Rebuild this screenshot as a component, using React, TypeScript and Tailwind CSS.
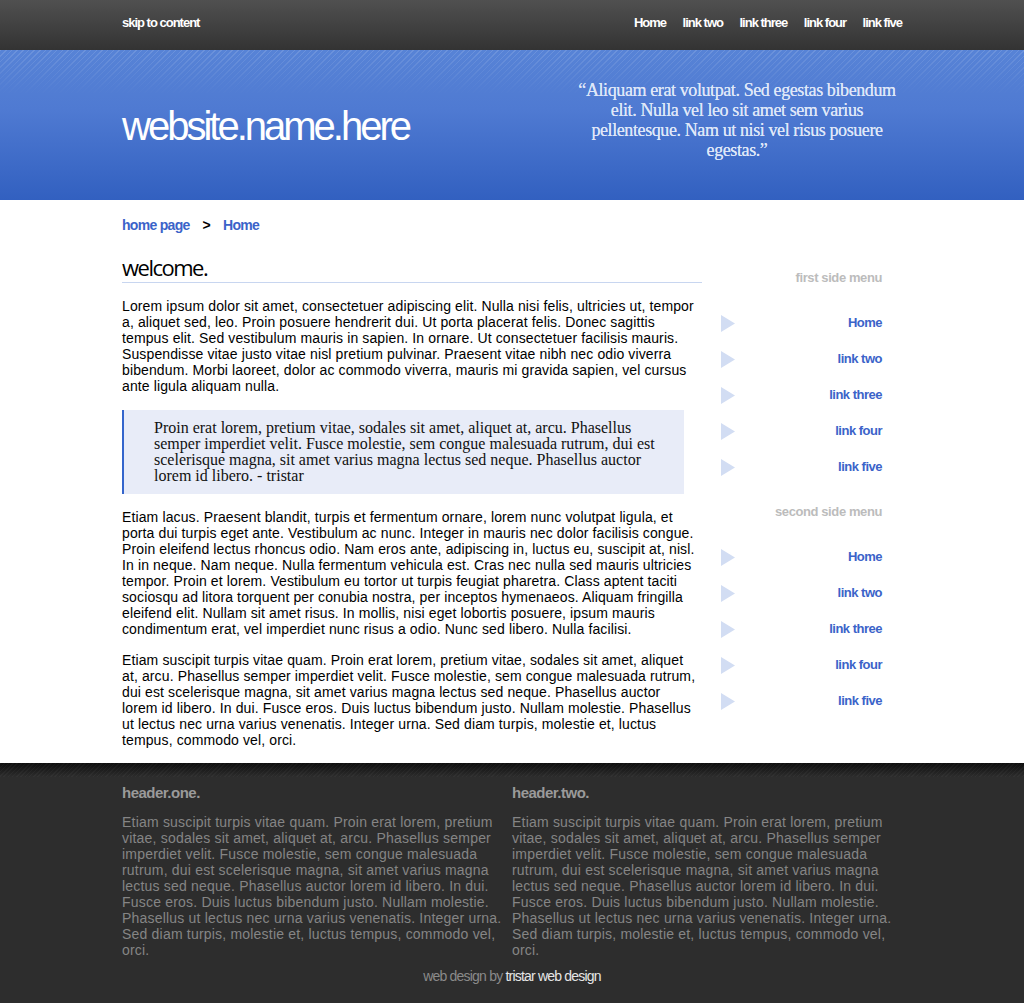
import React from "react";

const sideLinks = ["Home", "link two", "link three", "link four", "link five"];

function SideMenu({ title, first }: { title: string; first?: boolean }) {
  return (
    <div className={first ? "pt-[21px]" : "pt-[18px]"}>
      <h3 className="h-[18px] text-right pr-[20px] text-[13px] leading-[18px] font-bold tracking-[-0.4px] text-[#bcbcbc] mb-[18px]">
        {title}
      </h3>
      <ul>
        {sideLinks.map((l) => (
          <li key={l} className="h-[36px] flex items-center justify-between pl-[19px] pr-[20px]">
            <svg width="14" height="17" viewBox="0 0 14 17" className="block">
              <polygon points="0,0 14,8.5 0,17" fill="#d2ddf3" />
            </svg>
            <a className="text-[13px] font-bold tracking-[-0.5px] text-[#3b63c9]">{l}</a>
          </li>
        ))}
      </ul>
    </div>
  );
}

export default function App() {
  const navLinks = ["Home", "link two", "link three", "link four", "link five"];
  const footerText =
    "Etiam suscipit turpis vitae quam. Proin erat lorem, pretium vitae, sodales sit amet, aliquet at, arcu. Phasellus semper imperdiet velit. Fusce molestie, sem congue malesuada rutrum, dui est scelerisque magna, sit amet varius magna lectus sed neque. Phasellus auctor lorem id libero. In dui. Fusce eros. Duis luctus bibendum justo. Nullam molestie. Phasellus ut lectus nec urna varius venenatis. Integer urna. Sed diam turpis, molestie et, luctus tempus, commodo vel, orci.";
  return (
    <div className="min-h-screen bg-[#2d2d2d] font-['Liberation_Sans',Arial,sans-serif]">
      {/* top bar */}
      <div className="h-[50px] bg-[linear-gradient(to_bottom,#505050,#333333)]">
        <div className="w-[780px] mx-auto h-[45px] flex items-center justify-between text-white text-[13px] font-bold tracking-[-1px]">
          <a>skip to content</a>
          <nav className="flex gap-[16.5px]">
            {navLinks.map((l) => (
              <a key={l}>{l}</a>
            ))}
          </nav>
        </div>
      </div>
      {/* blue header */}
      <div className="relative h-[150px] bg-[linear-gradient(to_bottom,#5783d6,#4f7ad2_40%,#3260c0)] before:content-[''] before:absolute before:inset-x-0 before:top-0 before:h-[45px] before:bg-[repeating-linear-gradient(135deg,rgba(255,255,255,0.13)_0px,rgba(255,255,255,0.13)_1px,transparent_1px,transparent_4px)] before:[mask-image:linear-gradient(to_bottom,black,transparent)]">
        <div className="relative w-[780px] mx-auto h-full flex items-center justify-between">
          <h1 className="text-[40px] leading-[48px] tracking-[-3px] text-white pt-[2px]">website.name.here</h1>
          <p className="w-[334px] -mr-[2px] mb-[10px] text-center text-[18px] leading-[20px] tracking-[-0.4px] text-[#dfe7f8] font-['Liberation_Serif',Georgia,serif] [text-shadow:0_0_0.4px_#dfe7f8]">
            “Aliquam erat volutpat. Sed egestas bibendum elit. Nulla vel leo sit amet sem varius pellentesque. Nam ut nisi vel risus posuere egestas.”
          </p>
        </div>
      </div>
      {/* content */}
      <div className="bg-white">
        <div className="w-[780px] mx-auto pt-[17px] pb-[15px]">
          <div className="flex items-center text-[14px] leading-[16px] font-bold tracking-[-0.7px]">
            <a className="text-[#3b63c9]">home page</a>
            <span className="mx-[13px] text-black">&gt;</span>
            <a className="text-[#3b63c9]">Home</a>
          </div>
          <div className="flex mt-[15px]">
            <main className="w-[580px]">
              <h2 className="h-[35px] pt-[5px] text-[22px] leading-[28px] tracking-[-1.5px] text-black font-['Open_Sans',sans-serif] border-b border-[#c8d6f0]">
                welcome.
              </h2>
              <div className="text-[14px] leading-[16px] tracking-[0.12px] text-black">
                <p className="mt-[15px]">
                  Lorem ipsum dolor sit amet, consectetuer adipiscing elit. Nulla nisi felis, ultricies ut, tempor a, aliquet sed, leo. Proin posuere hendrerit dui. Ut porta placerat felis. Donec sagittis tempus elit. Sed vestibulum mauris in sapien. In ornare. Ut consectetuer facilisis mauris. Suspendisse vitae justo vitae nisl pretium pulvinar. Praesent vitae nibh nec odio viverra bibendum. Morbi laoreet, dolor ac commodo viverra, mauris mi gravida sapien, vel cursus ante ligula aliquam nulla.
                </p>
                <blockquote className="mt-[16px] mr-[18px] border-l-2 border-[#3465cc] bg-[#e8ecf8] pl-[30px] pr-[20px] py-[10px] text-[16px] leading-[16px] tracking-[0px] font-['Liberation_Serif',Georgia,serif] text-[#111]">
                  Proin erat lorem, pretium vitae, sodales sit amet, aliquet at, arcu. Phasellus semper imperdiet velit. Fusce molestie, sem congue malesuada rutrum, dui est scelerisque magna, sit amet varius magna lectus sed neque. Phasellus auctor lorem id libero. - tristar
                </blockquote>
                <p className="mt-[15px]">
                  Etiam lacus. Praesent blandit, turpis et fermentum ornare, lorem nunc volutpat ligula, et porta dui turpis eget ante. Vestibulum ac nunc. Integer in mauris nec dolor facilisis congue. Proin eleifend lectus rhoncus odio. Nam eros ante, adipiscing in, luctus eu, suscipit at, nisl. In in neque. Nam neque. Nulla fermentum vehicula est. Cras nec nulla sed mauris ultricies tempor. Proin et lorem. Vestibulum eu tortor ut turpis feugiat pharetra. Class aptent taciti sociosqu ad litora torquent per conubia nostra, per inceptos hymenaeos. Aliquam fringilla eleifend elit. Nullam sit amet risus. In mollis, nisi eget lobortis posuere, ipsum mauris condimentum erat, vel imperdiet nunc risus a odio. Nunc sed libero. Nulla facilisi.
                </p>
                <p className="mt-[15px] pr-[4px]">
                  Etiam suscipit turpis vitae quam. Proin erat lorem, pretium vitae, sodales sit amet, aliquet at, arcu. Phasellus semper imperdiet velit. Fusce molestie, sem congue malesuada rutrum, dui est scelerisque magna, sit amet varius magna lectus sed neque. Phasellus auctor lorem id libero. In dui. Fusce eros. Duis luctus bibendum justo. Nullam molestie. Phasellus ut lectus nec urna varius venenatis. Integer urna. Sed diam turpis, molestie et, luctus tempus, commodo vel, orci.
                </p>
              </div>
            </main>
            <aside className="w-[200px]">
              <SideMenu title="first side menu" first />
              <SideMenu title="second side menu" />
            </aside>
          </div>
        </div>
      </div>
      {/* footer */}
      <footer className="relative bg-[#2d2d2d] before:content-[''] before:absolute before:inset-x-0 before:top-0 before:h-[14px] before:bg-[repeating-linear-gradient(135deg,rgba(255,255,255,0.03)_0px,rgba(255,255,255,0.03)_1px,transparent_1px,transparent_3px),linear-gradient(to_bottom,#0e0e0e,#2d2d2d)]">
        <div className="relative w-[780px] mx-auto pt-[22px] pb-[20px]">
          <div className="flex gap-[8px]">
            {["header.one.", "header.two."].map((h) => (
              <div key={h} className="w-[382px]">
                <h4 className="text-[15px] leading-[16px] font-bold tracking-[-0.5px] text-[#9a9a9a] mb-[13px]">{h}</h4>
                <p className="text-[14px] leading-[16px] tracking-[0.2px] text-[#858585]">{footerText}</p>
              </div>
            ))}
          </div>
          <p className="mt-[10px] text-center text-[14px] leading-[16px] tracking-[-0.8px] text-[#8a8a8a]">
            web design by <a className="text-[#e6e6e6]">tristar web design</a>
          </p>
        </div>
      </footer>
    </div>
  );
}
